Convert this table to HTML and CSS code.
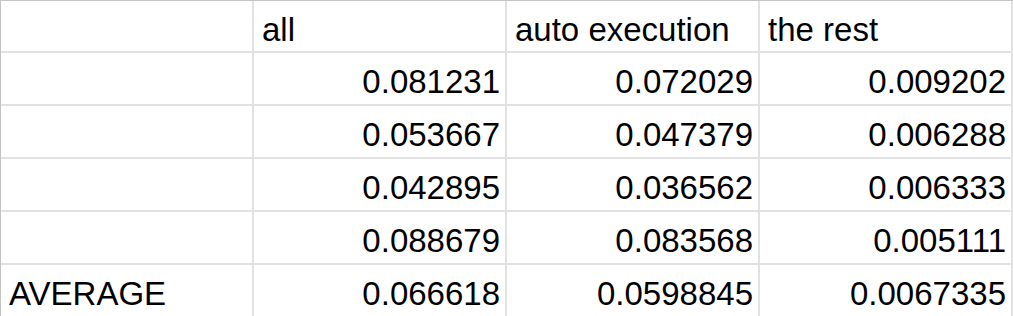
FILE: index.html
```html
<!DOCTYPE html>
<html>
<head>
<meta charset="utf-8">
<link rel="stylesheet" href="styles.css">
</head>
<body>
<div class="sheet">
  <div class="cell"></div>
  <div class="cell">all</div>
  <div class="cell">auto execution</div>
  <div class="cell">the rest</div>

  <div class="cell"></div>
  <div class="cell num">0.081231</div>
  <div class="cell num">0.072029</div>
  <div class="cell num">0.009202</div>

  <div class="cell"></div>
  <div class="cell num">0.053667</div>
  <div class="cell num">0.047379</div>
  <div class="cell num">0.006288</div>

  <div class="cell"></div>
  <div class="cell num">0.042895</div>
  <div class="cell num">0.036562</div>
  <div class="cell num">0.006333</div>

  <div class="cell"></div>
  <div class="cell num">0.088679</div>
  <div class="cell num">0.083568</div>
  <div class="cell num">0.005111</div>

  <div class="cell">AVERAGE</div>
  <div class="cell num">0.066618</div>
  <div class="cell num">0.0598845</div>
  <div class="cell num">0.0067335</div>
</div>
</body>
</html>
```

FILE: styles.css
```css
html, body {
  margin: 0;
  padding: 0;
  background: #ffffff;
  overflow: hidden;
}

.sheet {
  display: inline-grid;
  grid-template-columns: repeat(4, 251px);
  grid-template-rows: 50px repeat(5, 51px);
  gap: 2px;
  background: #e2e2e3;
  border-top: 1px solid #c4c4c4;
  border-left: 1px solid #c4c4c4;
  padding-right: 2px;
  font-family: "Liberation Sans", Arial, sans-serif;
  font-size: 33px;
  color: #000000;
}

.cell {
  background: #ffffff;
  padding: 10px 5px 0 8px;
  line-height: 37px;
  white-space: nowrap;
  overflow: hidden;
}

.num {
  text-align: right;
}
```
